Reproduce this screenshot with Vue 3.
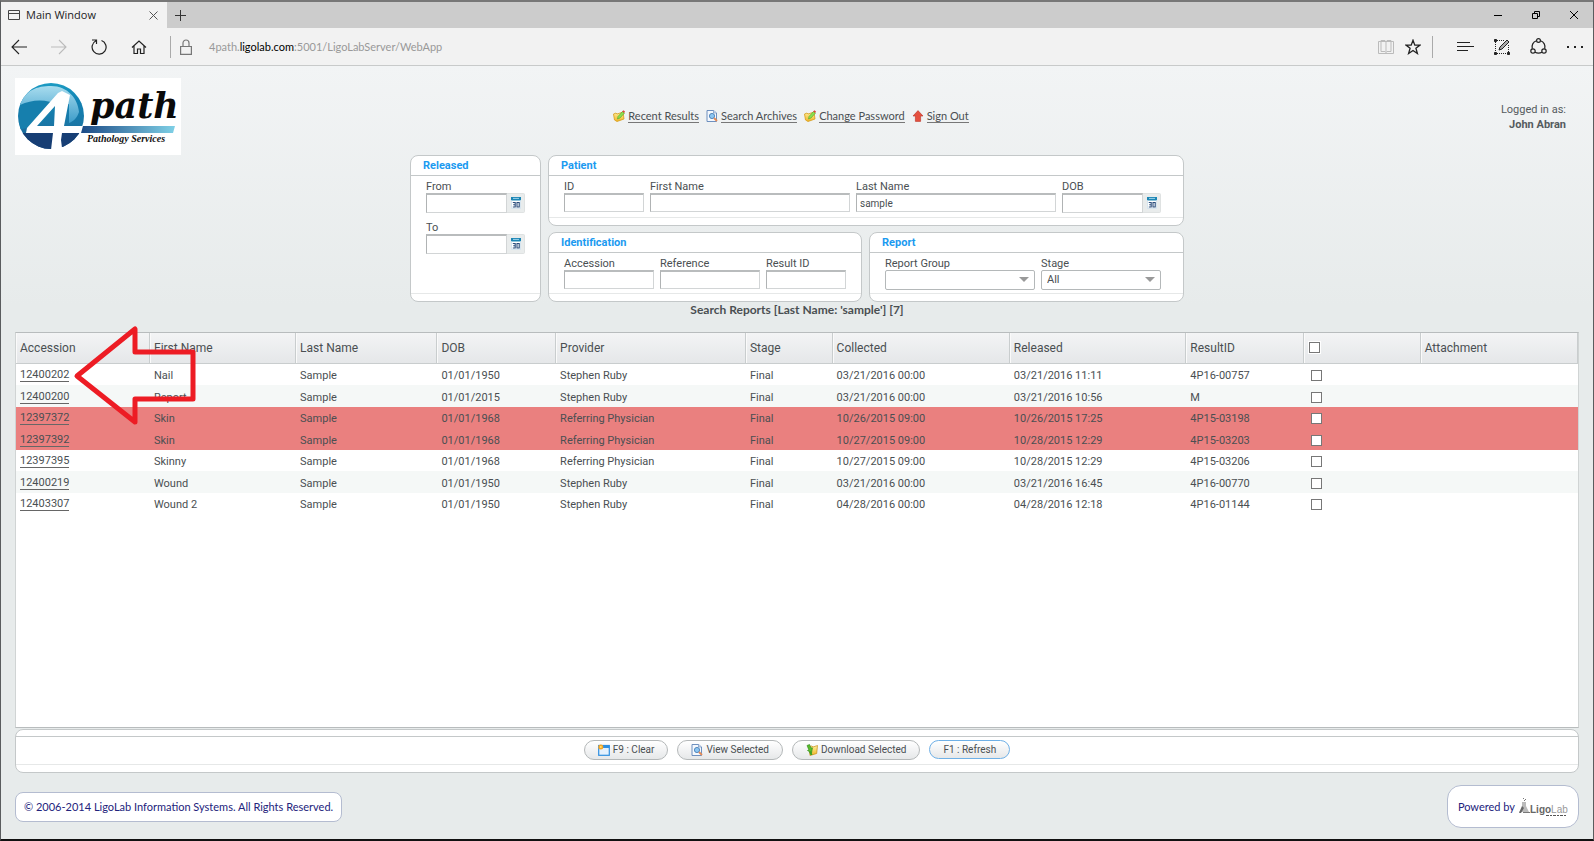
<script setup>
import { ref } from 'vue'

const lastName = ref('sample')
const stage = ref('All')

const columns = [
  { key: 'accession', label: 'Accession', cls: 'c-acc' },
  { key: 'first', label: 'First Name', cls: 'c-first' },
  { key: 'last', label: 'Last Name', cls: 'c-last' },
  { key: 'dob', label: 'DOB', cls: 'c-dob' },
  { key: 'provider', label: 'Provider', cls: 'c-prov' },
  { key: 'stage', label: 'Stage', cls: 'c-stage' },
  { key: 'collected', label: 'Collected', cls: 'c-coll' },
  { key: 'released', label: 'Released', cls: 'c-rel' },
  { key: 'result', label: 'ResultID', cls: 'c-res' },
  { key: 'check', label: '', cls: 'c-check' },
  { key: 'attachment', label: 'Attachment', cls: 'c-att' }
]

const make = (accession, first, dob, provider, collected, released, result, flagged = false) => ({
  accession, first, last: 'Sample', dob, provider, stage: 'Final', collected, released, result, flagged
})

const rows = [
  make('12400202', 'Nail', '01/01/1950', 'Stephen Ruby', '03/21/2016 00:00', '03/21/2016 11:11', '4P16-00757'),
  make('12400200', 'Report', '01/01/2015', 'Stephen Ruby', '03/21/2016 00:00', '03/21/2016 10:56', 'M'),
  make('12397372', 'Skin', '01/01/1968', 'Referring Physician', '10/26/2015 09:00', '10/26/2015 17:25', '4P15-03198', true),
  make('12397392', 'Skin', '01/01/1968', 'Referring Physician', '10/27/2015 09:00', '10/28/2015 12:29', '4P15-03203', true),
  make('12397395', 'Skinny', '01/01/1968', 'Referring Physician', '10/27/2015 09:00', '10/28/2015 12:29', '4P15-03206'),
  make('12400219', 'Wound', '01/01/1950', 'Stephen Ruby', '03/21/2016 00:00', '03/21/2016 16:45', '4P16-00770'),
  make('12403307', 'Wound 2', '01/01/1950', 'Stephen Ruby', '04/28/2016 00:00', '04/28/2016 12:18', '4P16-01144')
]
</script>

<template>
  <div class="window">
    <svg class="defs" width="0" height="0" aria-hidden="true">
      <defs>
        <linearGradient id="gold" x1="0" y1="0" x2="0" y2="1">
          <stop offset="0" stop-color="#fff1a0" /><stop offset="1" stop-color="#f0b424" />
        </linearGradient>
        <symbol id="i-edit" viewBox="0 0 12 12">
          <path d="M.5 4 3 3l1 1 6-2 1 7-7 2.500L1.500 10z" fill="url(#gold)" stroke="#d69c1c" stroke-width=".8" />
          <path d="M4.500 9 5 6.500 9.500 1.500l2 1.500L7 8z" fill="#8be04f" stroke="#4fa52c" stroke-width=".6" />
          <path d="M9.200 1.600 10.500.3l1.500 1.300-.9 1.300z" fill="#e0443c" />
        </symbol>
        <symbol id="i-search" viewBox="0 0 12 12">
          <path d="M1 .5h6.500L10.500 3v8.500H1z" fill="#f4f8fd" stroke="#5f84b8" stroke-width=".9" />
          <path d="M7.500.5V3h3" fill="#cfdff3" stroke="#5f84b8" stroke-width=".6" />
          <circle cx="6" cy="6" r="2.600" fill="#8cc6f2" stroke="#4b7fb5" stroke-width=".9" />
          <path d="m8 8 3 3" stroke="#e28a57" stroke-width="1.800" />
        </symbol>
        <symbol id="i-up" viewBox="0 0 12 12">
          <path d="M6 .6 11 6H8.600v5.400H3.400V6H1z" fill="#e5503f" stroke="#b83226" stroke-width=".6" />
        </symbol>
        <symbol id="i-cal" viewBox="0 0 10 12">
          <rect width="10" height="12" fill="#fff" /><path d="M0 0h10v3.500H0z" fill="#1c86b4" />
          <path d="M2 1.400h6" stroke="#9bd2ea" stroke-width="1" />
          <path d="M.4 3v8.600h9.200V3" fill="none" stroke="#c7dbe8" stroke-width=".8" />
          <path d="M1.800 5.500h2.400v4.500H1.800M2.200 7.700h2M6 5.500h2.200V10H6z" fill="none" stroke="#2a4d7c" stroke-width="1.100" />
        </symbol>
        <symbol id="i-window" viewBox="0 0 12 12">
          <rect x=".7" y="1.500" width="10.600" height="9.800" fill="#e4f1fd" stroke="#2f8fe0" stroke-width="1.200" />
          <path d="M.5 1.500h11v2.500H.5z" fill="#2f8fe0" />
          <circle cx="2.800" cy="3" r="2.500" fill="#f6a623" /><circle cx="2.800" cy="3" r="1" fill="#ffe27a" />
        </symbol>
        <symbol id="i-download" viewBox="0 0 12 12">
          <path d="M3 2.500 6 2l1 1 4.500-1.500-.8 8L4 11.500z" fill="url(#gold)" stroke="#c98d14" stroke-width=".7" />
          <path d="M1 1.500 3.500.5 5 4l1.500-.2L5.500 9 1.500 6.500l1.300-.8z" fill="#58bd2c" stroke="#2d8418" stroke-width=".6" />
          <path d="m3 8 2-1 1.500 4h-2z" fill="#3da223" />
        </symbol>
      </defs>
    </svg>

    <header class="chrome">
      <div class="tabs">
        <div class="tab">
          <svg class="ic" width="12" height="10" viewBox="0 0 12 10" fill="none" stroke="#444"><path d="M.5.5h11v9H.5zM.5 3.500h11" /></svg>
          <span>Main Window</span>
          <button class="bare close" aria-label="Close tab">
            <svg width="9" height="9" viewBox="0 0 9 9" stroke="#555" fill="none"><path d="m.5.5 8 8m0-8-8 8" /></svg>
          </button>
        </div>
        <button class="bare plus" aria-label="New tab">
          <svg width="11" height="11" viewBox="0 0 11 11" stroke="#333" fill="none"><path d="M5.500 0v11M0 5.500h11" /></svg>
        </button>
        <div class="winctl">
          <button class="bare" aria-label="Minimize"><svg width="10" height="10" viewBox="0 0 10 10" stroke="#000"><path d="M1 5.500h8" /></svg></button>
          <button class="bare" aria-label="Restore"><svg width="10" height="10" viewBox="0 0 10 10" stroke="#000" fill="none"><path d="M1.500 3.500h5v5h-5zM3.500 3V1.500h5v5H7" /></svg></button>
          <button class="bare" aria-label="Close"><svg width="10" height="10" viewBox="0 0 10 10" stroke="#000" fill="none"><path d="m1 1 8 8m0-8L1 9" /></svg></button>
        </div>
      </div>
      <div class="toolbar">
        <div class="navbtns">
          <button class="bare" aria-label="Back"><svg width="16" height="16" viewBox="0 0 16 16" stroke="#222" fill="none" stroke-width="1.100"><path d="M16 8H1m7-7L1 8l7 7" /></svg></button>
          <button class="bare" aria-label="Forward"><svg width="16" height="16" viewBox="0 0 16 16" stroke="#bbb" fill="none" stroke-width="1.100"><path d="M0 8h15M8 1l7 7-7 7" /></svg></button>
          <button class="bare" aria-label="Refresh page"><svg width="16" height="16" viewBox="0 0 16 16" stroke="#222" fill="none" stroke-width="1.200"><path d="M10.500 1.500a7 7 0 1 1-5.500.3M1 1h4.500v4" /></svg></button>
          <button class="bare" aria-label="Home"><svg width="16" height="16" viewBox="0 0 16 16" stroke="#222" fill="none" stroke-width="1.200"><path d="m1 8.500 7-6.500 7 6.500M3 7v7.500h3.500V10h3v4.500H13V7" /></svg></button>
        </div>
        <div class="address">
          <svg width="12" height="16" viewBox="0 0 12 16" stroke="#777" fill="none" stroke-width="1.200"><path d="M.6 7.500h10.800v7.900H.6zM3 7.500V4a3 3 0 0 1 6 0v3.500" /></svg>
          <span class="url">4path.<b>ligolab.com</b>:5001/LigoLabServer/WebApp</span>
        </div>
        <div class="tools">
          <button class="bare" aria-label="Reading view"><svg width="16" height="16" viewBox="0 0 16 16" stroke="#bbb" fill="none"><path d="M.5 2.500h15v12H.5zM3 1.500h4l1 1 1-1h4v11H9l-1 1-1-1H3zM8 2.500v11" /></svg></button>
          <button class="bare" aria-label="Add to favorites"><svg width="16" height="16" viewBox="0 0 16 16" stroke="#222" fill="none" stroke-width="1.300"><path d="m8 1.200 1.800 4.900H15L10.900 9.300l1.500 5.200L8 11.500l-4.400 3 1.500-5.200L1 6.100h5.200z" /></svg></button>
          <span class="divider"></span>
          <button class="bare" aria-label="Hub"><svg width="17" height="16" viewBox="0 0 17 16" stroke="#222" fill="none" stroke-width="1.200"><path d="M0 3.500h13M0 7.500h17M0 11.500h11" /></svg></button>
          <button class="bare" aria-label="Web note"><svg width="16" height="16" viewBox="0 0 16 16" stroke="#222" fill="none"><path d="M3 1.500h7M3 14.500h10M1.500 3v10M14.500 6v7" stroke-dasharray="1 1" /><path d="M.5.5h2v2h-2zM.5 13.500h2v2h-2zM13.500 13.500h2v2h-2z" fill="#222" /><path d="m5 11 1-3 7-7 2 2-7 7z" fill="#aaa" /></svg></button>
          <button class="bare" aria-label="Share"><svg width="17" height="17" viewBox="0 0 17 17" stroke="#222" fill="none" stroke-width="1.200"><path d="M6.500 2.700A6.500 6.500 0 0 0 2.300 10.800M10.500 2.700a6.500 6.500 0 0 1 4.200 8.100M5 14.300q3.500 1.700 7 0" /><circle cx="8.500" cy="2.500" r="1.900" /><circle cx="3" cy="13" r="2.200" /><circle cx="14" cy="13" r="2.200" /></svg></button>
          <button class="bare" aria-label="More actions"><svg width="16" height="16" viewBox="0 0 16 16" fill="#222"><path d="M0 7h2v2H0zM7 7h2v2H7zM14 7h2v2h-2z" /></svg></button>
        </div>
      </div>
    </header>

    <main class="page">
      <div class="banner">
        <svg class="logo" width="166" height="77" viewBox="0 0 166 77" role="img" aria-label="4path Pathology Services">
          <defs>
            <linearGradient id="orb" x1="0" y1="0" x2="0" y2="1">
              <stop offset="0" stop-color="#1fa3c8" /><stop offset=".3" stop-color="#1181b2" /><stop offset=".6" stop-color="#1a77a6" /><stop offset="1" stop-color="#14457d" />
            </linearGradient>
            <linearGradient id="gloss" x1="0" y1="0" x2="0" y2="1">
              <stop offset="0" stop-color="#a8dcee" /><stop offset="1" stop-color="#3c9cc9" />
            </linearGradient>
            <linearGradient id="bar" x1="0" y1="0" x2="1" y2="0">
              <stop offset="0" stop-color="#1c4a86" /><stop offset="1" stop-color="#7fd0e6" />
            </linearGradient>
            <clipPath id="orbclip"><circle cx="36" cy="38" r="33" /></clipPath>
          </defs>
          <rect width="166" height="77" fill="#fff" />
          <g clip-path="url(#orbclip)">
            <path d="M0 0h76v77H0z" fill="url(#orb)" />
            <path d="M5 27C10 12 22 8 36 8c17 0 27 13 28 26-2 6-5 9-10 11V26z" fill="url(#gloss)" />
            <path d="M5 27Q24 18 45 27L25 46 4 52z" fill="#167fad" />
            <path d="M0 55h76v22H0z" fill="#173e74" />
          </g>
          <path d="m47 13 8 4-6 31h19l-2 7H47l-1 7 1 8-3 2H36l2-17H11l1-5 31-35zM40 28 22 48h17z" fill="#fff" fill-rule="evenodd" />
          <path d="M68 48h92l-2 7H66z" fill="url(#bar)" />
          <text x="75" y="40" class="lg-name">path</text>
          <text x="72" y="64" class="lg-sub">Pathology Services</text>
        </svg>
        <nav class="links">
          <a href="#recent"><svg class="ic" width="12" height="12"><use href="#i-edit" /></svg><span>Recent Results</span></a>
          <a href="#archives"><svg class="ic" width="12" height="12"><use href="#i-search" /></svg><span>Search Archives</span></a>
          <a href="#password"><svg class="ic" width="12" height="12"><use href="#i-edit" /></svg><span>Change Password</span></a>
          <a href="#signout"><svg class="ic" width="12" height="12"><use href="#i-up" /></svg><span>Sign Out</span></a>
        </nav>
        <div class="user">Logged in as:<strong>John Abran</strong></div>
      </div>

      <form class="filters" @submit.prevent>
        <section class="panel released">
          <h2>Released</h2>
          <div class="fields stack">
            <div class="field">
              <label for="from">From</label>
              <div class="date"><input id="from" type="text" /><button type="button" aria-label="Pick start date"><svg width="10" height="12"><use href="#i-cal" /></svg></button></div>
            </div>
            <div class="field">
              <label for="to">To</label>
              <div class="date"><input id="to" type="text" /><button type="button" aria-label="Pick end date"><svg width="10" height="12"><use href="#i-cal" /></svg></button></div>
            </div>
          </div>
        </section>
        <section class="panel patient">
          <h2>Patient</h2>
          <div class="fields">
            <div class="field w80"><label for="pid">ID</label><input id="pid" type="text" /></div>
            <div class="field w200"><label for="fname">First Name</label><input id="fname" type="text" /></div>
            <div class="field w200"><label for="lname">Last Name</label><input id="lname" v-model="lastName" type="text" /></div>
            <div class="field">
              <label for="dob">DOB</label>
              <div class="date"><input id="dob" type="text" /><button type="button" aria-label="Pick date of birth"><svg width="10" height="12"><use href="#i-cal" /></svg></button></div>
            </div>
          </div>
        </section>
        <section class="panel ident">
          <h2>Identification</h2>
          <div class="fields">
            <div class="field w90"><label for="acc">Accession</label><input id="acc" type="text" /></div>
            <div class="field w100"><label for="refr">Reference</label><input id="refr" type="text" /></div>
            <div class="field w80"><label for="rid">Result ID</label><input id="rid" type="text" /></div>
          </div>
        </section>
        <section class="panel report">
          <h2>Report</h2>
          <div class="fields">
            <div class="field w150"><label for="group">Report Group</label><div class="select"><select id="group"><option></option></select></div></div>
            <div class="field w120"><label for="stage">Stage</label><div class="select"><select id="stage" v-model="stage"><option>All</option></select></div></div>
          </div>
        </section>
      </form>

      <h1 class="title">Search Reports [Last Name: 'sample'] [7]</h1>

      <div class="results">
        <table>
          <thead>
            <tr>
              <th v-for="c in columns" :key="c.key" :class="c.cls" scope="col">
                <input v-if="c.key === 'check'" type="checkbox" aria-label="Select all" class="all" />
                <template v-else>{{ c.label }}</template>
              </th>
            </tr>
          </thead>
          <tbody>
            <tr v-for="r in rows" :key="r.accession" :class="{ flagged: r.flagged }">
              <td v-for="c in columns" :key="c.key" :class="c.cls">
                <a v-if="c.key === 'accession'" href="#result">{{ r.accession }}</a>
                <input v-else-if="c.key === 'check'" type="checkbox" :aria-label="'Select ' + r.accession" />
                <template v-else>{{ r[c.key] }}</template>
              </td>
            </tr>
          </tbody>
        </table>
        <svg class="arrow" width="124" height="102" viewBox="0 0 124 102" fill="none" stroke="#ed1c24" stroke-width="5">
          <path d="M4 51 62 4v23h58v47H62v23z" stroke-linejoin="round" />
        </svg>
      </div>

      <div class="actions">
        <div class="actions-in">
          <button type="button" class="pill"><svg class="ic" width="12" height="12"><use href="#i-window" /></svg>F9 : Clear</button>
          <button type="button" class="pill"><svg class="ic" width="12" height="12"><use href="#i-search" /></svg>View Selected</button>
          <button type="button" class="pill"><svg class="ic" width="12" height="12"><use href="#i-download" /></svg>Download Selected</button>
          <button type="button" class="pill blue">F1 : Refresh</button>
        </div>
      </div>

      <footer class="foot">
        <div class="copy">© 2006-2014 LigoLab Information Systems. All Rights Reserved.</div>
        <div class="powered">
          <span>Powered by</span>
          <svg width="50" height="20" viewBox="0 0 50 20" role="img" aria-label="LigoLab">
            <path d="M4 5h4v4l3 6H1l3-4z" fill="#bbb" /><path d="m4 9 2 2-3 5H1z" fill="#666" /><path d="M5 1h1v1H5zM7 2h1v1H7zM6 3h1v1H6zM5 15h7v1H5z" fill="#777" />
            <text x="12" y="16" class="lg-ligo">Ligo<tspan class="lg-lab">Lab</tspan></text>
            <path d="M28 18.500h21" stroke="#555" stroke-width="1" stroke-dasharray="3 1 2 1" />
          </svg>
        </div>
      </footer>
    </main>
  </div>
</template>

<style>
body { margin: 0; background: #111; }
</style>

<style scoped>
* { box-sizing: border-box; }
.window {
  display: flex; flex-direction: column; min-height: 100vh;
  border: 1px solid #5a5c5e; border-top: 2px solid #777; border-bottom: 2px solid #111;
  font: 11px/14px Roboto, "Liberation Sans", sans-serif; color: #4a4f52;
}
.defs { position: absolute; }
button, input, select { font: inherit; color: inherit; }
.ic { flex: none; display: block; }
.bare { display: flex; padding: 0; border: 0; background: none; }

.chrome { color: #222; }
.tabs { display: flex; align-items: center; height: 26px; background: #ccc; }
.tab { display: flex; align-items: center; gap: 6px; width: 166px; height: 26px; padding: 0 9px 0 7px; background: #f2f2f2; font-family: "Open Sans", "Noto Sans", sans-serif; }
.close { margin-left: auto; }
.plus { margin-left: 8px; }
.winctl { display: flex; gap: 28px; margin-left: auto; padding-right: 14px; }
.toolbar { display: flex; align-items: center; height: 38px; background: #f2f2f2; border-bottom: 1px solid #c8caca; }
.navbtns { display: flex; gap: 24px; padding: 0 23px 0 10px; }
.address { display: flex; align-items: center; gap: 17px; height: 22px; padding-left: 9px; border-left: 1px solid #aaa; }
.url { color: #999; font-family: Lato, sans-serif; }
.url b { font-weight: 400; color: #000; }
.tools { display: flex; align-items: center; gap: 20px; margin-left: auto; padding-right: 10px; }
.tools .bare:first-child { margin-right: -9px; }
.divider { width: 1px; height: 22px; margin: 0 4px 0 -9px; background: #aaa; }

.page {
  flex: 1; display: flex; flex-direction: column; padding: 12px 14px 11px 14px;
  background: linear-gradient(#f2f4f5, #e7ebeb 240px);
}
.banner { display: grid; grid-template-columns: 1fr auto 1fr; align-items: start; height: 77px; }
.logo { display: block; }
.lg-name { font: italic bold 35px "DejaVu Serif", serif; fill: #0a0a0a; }
.lg-sub { font: italic bold 10px "Liberation Serif", serif; fill: #111; }
.links { display: flex; gap: 7px; padding: 31px 12px 0 0; font-family: Lato, sans-serif; }
.links a { display: flex; align-items: center; gap: 3px; color: #4a4f52; text-decoration: none; }
.links span { line-height: 13px; border-bottom: 1px solid #777; }
.user { justify-self: end; padding: 24px 13px 0 0; text-align: right; line-height: 15px; color: #555b5e; }
.user strong { display: block; }

.filters { display: grid; grid-template-columns: 131px 314px 315px; grid-template-rows: 71px 70px; gap: 6px 7px; justify-content: center; }
.panel { display: flex; flex-direction: column; background: #fff; border: 1px solid #c4c8c9; border-radius: 8px; padding-bottom: 7px; }
.released { grid-row: span 2; }
.patient { grid-column: 2 / 4; }
h2 { margin: 0; padding: 0 12px; font-size: 11px; line-height: 19px; color: #1b9af0; border-bottom: 1px solid #c4c8c9; }
.fields { flex: 1; display: flex; align-items: flex-start; gap: 6px; padding: 4px 15px 0; border-bottom: 1px solid #e6e8e8; }
.stack { flex-direction: column; gap: 8px; }
.field label { display: block; line-height: 13px; }
.field input { display: block; width: 100%; height: 19px; padding: 0 3px; font-size: 10px; border: 1px solid #d2d5d6; border-top: 2px solid #b9bcbd; border-left-color: #b0b3b4; border-radius: 0; outline: none; background: #fff; }
.date { display: flex; width: 99px; height: 20px; }
.date input { width: 81px; height: 20px; }
.date button { display: flex; align-items: center; justify-content: center; width: 18px; padding: 0; background: #e9ecec; border: 1px solid #dfe2e2; border-left: 0; border-radius: 0 2px 2px 0; }
.w80 { width: 80px; } .w90 { width: 90px; } .w100 { width: 100px; } .w120 { width: 120px; } .w150 { width: 150px; } .w200 { width: 200px; }
.select { position: relative; }
.select select { appearance: none; display: block; width: 100%; height: 20px; padding: 0 5px; background: #fff; border: 1px solid #b4b8b9; border-radius: 2px; }
.select::after { content: ""; position: absolute; right: 6px; top: 7px; border: 5px solid transparent; border-top-color: #999; border-bottom: 0; pointer-events: none; }

.title { margin: 1px 0 15px; text-align: center; font: bold 12px/14px Lato, sans-serif; }

.results { position: relative; flex: 1; background: #fff; border: 1px solid #b8bcbd; border-left-color: #d0d4d4; border-right-color: #d0d4d4; }
table { width: 100%; table-layout: fixed; border-collapse: separate; border-spacing: 0; }
th { height: 31px; padding: 0 4px; text-align: left; font-size: 12px; font-weight: 400; background: linear-gradient(#f3f4f5, #e5e7e9); border-bottom: 1px solid #c9cdce; border-right: 1px solid #c9cdce; box-shadow: inset 1px 0 #fafafa; }
td { height: 21px; padding: 3px 4px 0; line-height: 14px; white-space: nowrap; }
tbody tr:nth-child(even) td { height: 22px; background: #f5f8f7; }
tbody tr.flagged td, tbody tr.flagged:nth-child(even) td { background: #ea807f; }
td a { display: inline-block; margin-bottom: 2px; line-height: 12px; color: inherit; text-decoration: none; border-bottom: 1px solid #666; }
.c-acc { width: 134px; }
.c-first { width: 9.35%; } .c-last { width: 9.05%; } .c-dob { width: 7.6%; } .c-prov { width: 12.15%; }
.c-stage { width: 5.55%; } .c-coll { width: 11.35%; } .c-rel { width: 11.3%; } .c-res { width: 7.5%; } .c-check { width: 7.5%; }
table input { appearance: none; display: block; width: 11px; height: 11px; margin: 0 0 1px 3px; background: #fff; border: 1px solid #777; }
table .all { margin: 0 0 2px 1px; outline: 1px solid #fff; }
.arrow { position: absolute; left: 57px; top: -8px; pointer-events: none; }

.actions { margin-top: 1px; padding: 6px 0 7px; background: #fff; border: 1px solid #c4c8c9; border-radius: 8px; }
.actions-in { display: flex; justify-content: center; align-items: flex-start; gap: 9px; padding: 3px 0 4px; border-top: 1px solid #c4c8c9; border-bottom: 1px solid #e6e8e8; }
.pill { display: flex; align-items: center; gap: 3px; height: 20px; padding: 0 13px; font-size: 10px; background: linear-gradient(#fff, #f0f1f2 60%, #e6e8e9); border: 1px solid #b4b8b9; border-radius: 10px; }
.blue { height: 19px; border-color: #6fb0e6; }

.foot { display: flex; justify-content: space-between; align-items: center; margin-top: 12px; color: #23237c; font-family: Lato, sans-serif; }
.copy { padding: 7px 8px; background: #fff; border: 1px solid #b4bcd0; border-radius: 8px; }
.powered { display: flex; align-items: center; gap: 3px; height: 43px; padding: 0 10px; background: #fff; border: 1px solid #b4bcd0; border-radius: 14px; }
.lg-ligo { font: bold 10px "Liberation Sans", sans-serif; fill: #666; }
.lg-lab { font-weight: 400; fill: #999; }
</style>
